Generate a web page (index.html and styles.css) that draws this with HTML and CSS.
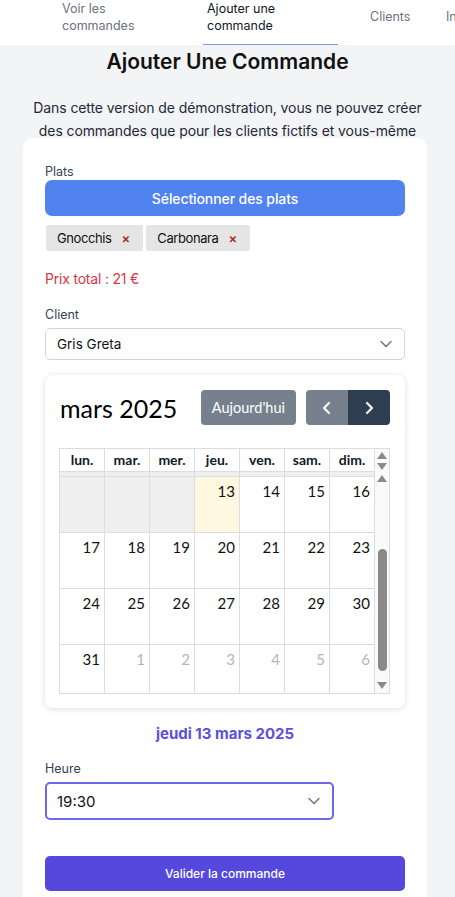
FILE: index.html
```html
<!DOCTYPE html>
<html lang="fr">
<head>
<meta charset="utf-8">
<title>Ajouter une commande</title>
<link rel="stylesheet" href="styles.css">
</head>
<body>
<nav class="topnav">
  <a class="nav-item w1">Voir les<br>commandes</a>
  <a class="nav-item w2 active">Ajouter une<br>commande</a>
  <a class="nav-item w3">Clients</a>
  <a class="nav-item w4">Infos</a>
</nav>

<main class="page">
  <h1 class="title">Ajouter Une Commande</h1>
  <p class="intro">Dans cette version de démonstration, vous ne pouvez créer des commandes que pour les clients fictifs et vous-même</p>

  <section class="card">
    <label class="field-label">Plats</label>
    <button class="btn-dishes">Sélectionner des plats</button>
    <div class="chips">
      <span class="chip">Gnocchis <span class="chip-x">×</span></span>
      <span class="chip">Carbonara <span class="chip-x">×</span></span>
    </div>
    <p class="total">Prix total : 21 €</p>

    <label class="field-label">Client</label>
    <div class="select client">
      <span>Gris Greta</span>
      <svg class="chev" width="12" height="8" viewBox="0 0 12 8"><path d="M1 1.5l5 5 5-5" fill="none" stroke="#6b7280" stroke-width="1.4" stroke-linecap="round" stroke-linejoin="round"/></svg>
    </div>

    <div class="calendar">
      <div class="cal-toolbar">
        <h2 class="cal-title">mars 2025</h2>
        <div class="cal-actions">
          <button class="fc-btn disabled">Aujourd'hui</button>
          <div class="fc-group">
            <button class="fc-btn disabled arrow"><svg width="12" height="14" viewBox="0 0 12 14"><path d="M8 2L3 7l5 5" fill="none" stroke="#fff" stroke-width="2.2" stroke-linecap="round" stroke-linejoin="round"/></svg></button>
            <button class="fc-btn arrow"><svg width="12" height="14" viewBox="0 0 12 14"><path d="M4 2l5 5-5 5" fill="none" stroke="#fff" stroke-width="2.2" stroke-linecap="round" stroke-linejoin="round"/></svg></button>
          </div>
        </div>
      </div>

      <div class="cal-grid">
        <div class="cal-head-row">
          <div class="cal-head">
            <div class="hd">lun.</div><div class="hd">mar.</div><div class="hd">mer.</div><div class="hd">jeu.</div><div class="hd">ven.</div><div class="hd">sam.</div><div class="hd">dim.</div>
          </div>
          <div class="sb sb-head">
            <span class="tri up"></span>
            <span class="tri down"></span>
          </div>
        </div>
        <div class="cal-body-row">
          <div class="cal-body">
            <div class="cell past strip"></div><div class="cell past strip"></div><div class="cell past strip"></div><div class="cell past strip"></div><div class="cell past strip"></div><div class="cell past strip"></div><div class="cell past strip"></div>

            <div class="cell past"></div><div class="cell past"></div><div class="cell past"></div><div class="cell today">13</div><div class="cell">14</div><div class="cell">15</div><div class="cell">16</div>

            <div class="cell">17</div><div class="cell">18</div><div class="cell">19</div><div class="cell">20</div><div class="cell">21</div><div class="cell">22</div><div class="cell">23</div>

            <div class="cell">24</div><div class="cell">25</div><div class="cell">26</div><div class="cell">27</div><div class="cell">28</div><div class="cell">29</div><div class="cell">30</div>

            <div class="cell last">31</div><div class="cell last other">1</div><div class="cell last other">2</div><div class="cell last other">3</div><div class="cell last other">4</div><div class="cell last other">5</div><div class="cell last other">6</div>
          </div>
          <div class="sb sb-body">
            <span class="tri up"></span>
            <span class="thumb"></span>
            <span class="tri down"></span>
          </div>
        </div>
      </div>
    </div>

    <p class="picked">jeudi 13 mars 2025</p>

    <label class="field-label">Heure</label>
    <div class="select time">
      <span>19:30</span>
      <svg class="chev" width="12" height="8" viewBox="0 0 12 8"><path d="M1 1.5l5 5 5-5" fill="none" stroke="#6b7280" stroke-width="1.4" stroke-linecap="round" stroke-linejoin="round"/></svg>
    </div>

    <button class="btn-submit">Valider la commande</button>
  </section>
</main>
</body>
</html>
```

FILE: styles.css
```css
* { box-sizing: border-box; }
html, body { margin: 0; padding: 0; }
body {
  background: #f3f4f6;
  font-family: "Inter", "Noto Sans", sans-serif;
  color: #111827;
  overflow: hidden;
}

.topnav {
  background: #fff;
  height: 45px;
  display: flex;
  padding-left: 58px;
  overflow: hidden;
  white-space: nowrap;
}
.nav-item {
  height: 45px;
  flex: none;
  display: flex;
  align-items: center;
  padding: 0 4px 10px;
  font-size: 12.5px;
  line-height: 17.5px;
  color: #6b7280;
  border-bottom: 1px solid transparent;
}
.nav-item.active { color: #111827; border-bottom-color: #8b8ff0; }
.w1 { width: 145px; }
.w2 { width: 135px; margin-right: 28px; }
.w3 { width: 76px; }

.page { padding-top: 4px; }
.title {
  margin: 0;
  text-align: center;
  font-size: 21px;
  line-height: 26px;
  font-weight: 600;
  color: #111;
}
.intro {
  margin: 21px auto 0;
  width: 410px;
  text-align: center;
  font-size: 14px;
  letter-spacing: -0.1px;
  line-height: 23px;
  color: #1f2937;
}

.card {
  margin: -4px 28px 0 23px;
  background: #fff;
  border-radius: 10px 10px 0 0;
  padding: 26px 22px 40px;
  display: flex;
  flex-direction: column;
}
.field-label {
  font-size: 12.5px;
  line-height: 16px;
  color: #374151;
}
.btn-dishes {
  margin-top: 0;
  height: 36px;
  border: 0;
  border-radius: 7px;
  background: #5183f0;
  color: #fff;
  font-family: inherit;
  font-size: 14px;
  letter-spacing: -0.1px;
  font-weight: 500;
}
.chips {
  display: flex;
  gap: 3px;
  margin: 9px 0 0 1px;
}
.chip {
  height: 26px;
  display: flex;
  align-items: center;
  background: #e5e5e5;
  border-radius: 2px;
  padding: 0 13px 0 11px;
  font-size: 13px;
  letter-spacing: -0.4px;
  color: #111;
  gap: 10px;
}
.chip-x { color: #b91c1c; font-size: 13px; font-weight: 600; letter-spacing: 0; }
.total {
  margin: 18px 0 18px;
  font-size: 14px;
  letter-spacing: -0.2px;
  line-height: 20px;
  color: #dc3545;
}
.select {
  height: 32px;
  border: 1px solid #d1d5db;
  border-radius: 5px;
  display: flex;
  align-items: center;
  justify-content: space-between;
  padding: 0 12px 0 11px;
  font-size: 13.5px;
  color: #111;
}
.select.client { margin-top: 5px; }

.calendar {
  margin-top: 15px;
  height: 333px;
  border-radius: 8px;
  box-shadow: 0 1px 6px rgba(0,0,0,0.13);
  padding: 15px 15px 0 14px;
}
.cal-toolbar {
  height: 35px;
  display: flex;
  align-items: center;
  justify-content: space-between;
  margin-bottom: 23px;
}
.cal-title {
  margin: 0;
  font-family: "Lato", sans-serif;
  font-weight: 400;
  font-size: 25px;
  color: #000;
  padding-left: 1px;
}
.cal-actions { display: flex; gap: 10px; }
.fc-btn {
  height: 35px;
  border: 0;
  border-radius: 4px;
  background: #2c3e50;
  color: #fff;
  font-family: "Lato", sans-serif;
  font-size: 14.5px;
  padding: 0 11px;
}
.fc-btn.disabled { background: #76818d; }
.fc-group { display: flex; }
.fc-btn.arrow { width: 42px; padding: 0; display: flex; align-items: center; justify-content: center; }
.fc-group .fc-btn:first-child { border-radius: 4px 0 0 4px; }
.fc-group .fc-btn:last-child { border-radius: 0 4px 4px 0; }

.cal-grid {
  border: 1px solid #ddd;
  font-family: "Lato", sans-serif;
  width: 331px;
}
.cal-head-row, .cal-body-row { display: flex; }
.cal-head {
  display: grid;
  grid-template-columns: repeat(7, 45px);
  width: 315px;
}
.hd {
  height: 23px;
  line-height: 22px;
  text-align: center;
  font-weight: 700;
  font-size: 14px;
  border-right: 1px solid #ddd;
  border-bottom: 1px solid #ddd;
}
.cal-body {
  display: grid;
  grid-template-columns: repeat(7, 45px);
  grid-template-rows: 5px 56px 56px 56px 48px;
  width: 315px;
}
.cell {
  border-right: 1px solid #ddd;
  border-bottom: 1px solid #ddd;
  text-align: right;
  padding: 4px 4px 0 0;
  font-size: 15px;
  line-height: 20px;
  color: #111;
}
.cell.last { border-bottom: 0; }
.cell.past { background: #efefef; }
.cell.strip { padding: 0; }
.cell.today { background: #fef8e1; }
.cell.other { color: #b5b5b5; }

.sb {
  width: 15px;
  background: #fafafa;
  display: flex;
  flex-direction: column;
  align-items: center;
}
.sb-head { height: 23px; justify-content: space-between; padding: 3px 0 2px; }
.sb-body { height: 221px; padding: 3px 0 4px; }
.tri {
  width: 0; height: 0;
  border-left: 5px solid transparent;
  border-right: 5px solid transparent;
}
.tri.up { border-bottom: 7px solid #8a8a8a; }
.tri.down { border-top: 7px solid #8a8a8a; }
.sb-body .tri.down { margin-top: auto; }
.thumb {
  margin-top: 67px;
  width: 9px;
  height: 122px;
  border-radius: 5px;
  background: #8a8a8a;
}

.picked {
  margin: 16px 0 17px;
  text-align: center;
  font-size: 15px;
  line-height: 20px;
  font-weight: 700;
  color: #5b4fdc;
}
.select.time {
  margin-top: 5px;
  width: 289px;
  height: 38px;
  border: 2px solid #6d68ea;
  padding-left: 10px;
  font-size: 15px;
}
.btn-submit {
  margin-top: 36px;
  height: 35px;
  border: 0;
  border-radius: 5px;
  background: #5549dd;
  color: #fff;
  font-family: inherit;
  font-size: 12px;
  font-weight: 500;
}
```
